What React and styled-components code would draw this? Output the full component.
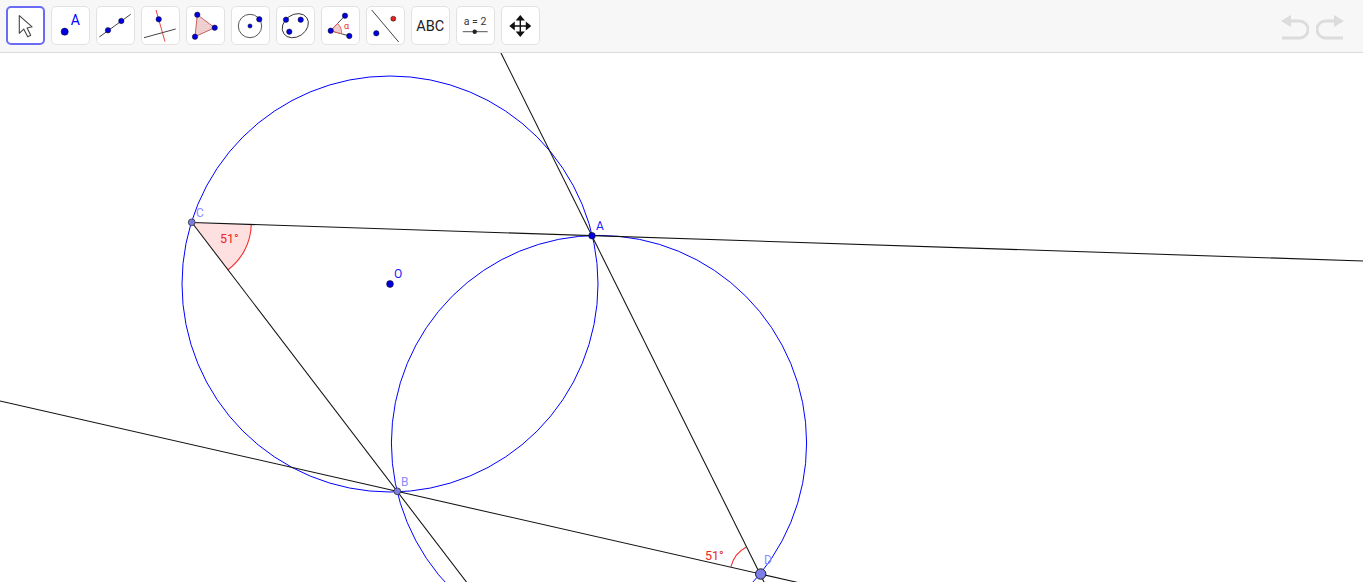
import React from "react";
import styled, { createGlobalStyle } from "styled-components";

const Global = createGlobalStyle`
  html, body { margin: 0; padding: 0; background: #fff; overflow: hidden; }
  #root { width: 1365px; height: 584px; }
`;
const Page = styled.div`
  width: 1363px; height: 582px; display: flex; flex-direction: column;
  font-family: Roboto, "Liberation Sans", sans-serif; overflow: hidden;
`;
const Toolbar = styled.div`
  flex: 0 0 53px; box-sizing: border-box; height: 53px; display: flex; align-items: flex-start;
  justify-content: space-between; padding: 6px 0 0 6px; background: #f7f7f7; border-bottom: 1px solid #dcdcdc;
`;
const Tools = styled.div`display: flex; gap: 6px; margin-left: -0.4px;`;
const Tool = styled.div`
  box-sizing: border-box; width: 39px; height: 39px; display: flex; align-items: center; justify-content: center;
  background: #fff; border-radius: 5px;
  border: ${p => (p.$active ? "2px solid #6a6cf6" : "1px solid #e2e2e2")};
  svg { display: block; width: 37px; height: 37px; flex: none; }
`;
const History = styled.div`display: flex; gap: 7px; padding: 8px 19px 0 0;`;
const Canvas = styled.svg`flex: 1 1 auto; display: block; width: 1363px; height: 529px;`;
const Label = styled.text`
  font-family: Roboto, "Liberation Sans", sans-serif; font-size: ${p => p.$size || 12}px; fill: ${p => p.$color};
`;

const B = "#0000ff", K = "#111", R = "#f52c2c", DOT = "#0000e0";
const Dot = ({ x, y, r = 2.7 }) => <circle cx={x} cy={y} r={r} fill={DOT} stroke="#111" strokeWidth=".5" />;
const Ic = ({ children }) => <svg viewBox="0 0 37 37">{children}</svg>;
const Hatch = ({ id }) => (
  <defs>
    <pattern id={id} width="2" height="2" patternUnits="userSpaceOnUse">
      <rect width="2" height="2" fill="#f4e6e6" />
      <circle cx="1" cy="1" r=".55" fill="#d98080" />
    </pattern>
  </defs>
);

const icons = [
  <Ic><path d="M12.3 8.7V26.3l4.4-4.2 4 7.6 3-1.5-3.6-7.2 5-1.2z" fill="#fff" stroke="#444" strokeWidth="1.1" strokeLinejoin="round" /></Ic>,
  <Ic><circle cx="12.7" cy="24.7" r="3.6" fill={DOT} stroke="#111" strokeWidth=".5" /><text x="18.7" y="18" fontFamily="Roboto, sans-serif" fontSize="14" fill={B}>A</text></Ic>,
  <Ic><path d="M2.3 30 L33.7 7.3" stroke="#444" strokeWidth="1" /><Dot x="11" y="23.3" /><Dot x="24.3" y="14" /></Ic>,
  <Ic><path d="M14 3 L23 34.7" stroke="#f04444" strokeWidth="1" /><path d="M2 30.7 L33.7 22" stroke="#444" strokeWidth="1" /><Dot x="16.7" y="12.3" /></Ic>,
  <Ic><Hatch id="tri" /><path d="M10.3 7.7 L27.7 20.7 L8 29.7 Z" fill="url(#tri)" stroke="#c86060" strokeWidth="1" /><Dot x="10.3" y="7.7" /><Dot x="27.7" y="20.7" /><Dot x="8" y="29.7" /></Ic>,
  <Ic><circle cx="18" cy="19" r="11.7" fill="none" stroke="#444" strokeWidth=".9" /><Dot x="18" y="19" r="2.1" /><Dot x="27.3" y="12.3" /></Ic>,
  <Ic><ellipse cx="18.3" cy="18.7" rx="14" ry="11" transform="rotate(-35 18.3 18.7)" fill="none" stroke="#333" strokeWidth=".9" /><Dot x="9" y="12.7" /><Dot x="23.7" y="12.7" /><Dot x="12.3" y="24.7" /></Ic>,
  <Ic><Hatch id="ang" /><path d="M23 8.7 L8.7 23.7 L27.3 29" fill="none" stroke="#444" strokeWidth="1" /><path d="M8.7 23.7 L15.5 16.6 A11 11 0 0 1 19.3 26.7 Z" fill="url(#ang)" stroke="#f04444" strokeWidth=".8" /><Dot x="23" y="8.7" /><Dot x="8.7" y="23.7" /><Dot x="27.3" y="29" /><text x="22" y="22" fontFamily="Roboto, sans-serif" fontSize="9" fill="#e83030">α</text></Ic>,
  <Ic><path d="M4.7 3 L31.7 35" stroke="#444" strokeWidth="1" /><Dot x="9.3" y="26.3" /><circle cx="26.3" cy="11.7" r="2.5" fill="#e82020" stroke="#111" strokeWidth=".5" /></Ic>,
  <Ic><text x="18.2" y="24" textAnchor="middle" fontFamily="Roboto, sans-serif" fontSize="14.5" fill="#222">ABC</text></Ic>,
  <Ic><text x="18" y="18" textAnchor="middle" fontFamily="Roboto, sans-serif" fontSize="10.5" fill="#333">a = 2</text><path d="M5.7 24.7H30.7" stroke="#555" strokeWidth="1" /><circle cx="17.7" cy="24.7" r="2.2" fill="#222" /></Ic>,
  <Ic><path d="M18.3 10v18M9 19h18.6" stroke="#111" strokeWidth="1.4" /><path d="M18.3 8l4.6 5.5h-9.2zM18.3 30l4.6-5.5h-9.2zM7.3 19l5.5-4.6v9.2zM29.3 19l-5.5-4.6v9.2z" fill="#111" /></Ic>,
];

export default function App() {
  return (
    <Page>
      <Global />
      <Toolbar>
        <Tools>
          {icons.map((ic, i) => <Tool key={i} $active={i === 0}>{ic}</Tool>)}
        </Tools>
        <History>
          <svg width="28" height="26" viewBox="0 0 28 26"><path d="M8 7H18.5a8.5 8.5 0 0 1 0 17H1" fill="none" stroke="#dcdcdc" strokeWidth="2.8" /><path d="M0 7L10 1V13Z" fill="#dcdcdc" /></svg>
          <svg width="28" height="26" viewBox="0 0 28 26"><path d="M20 7H9.5a8.5 8.5 0 0 0 0 17H27" fill="none" stroke="#dcdcdc" strokeWidth="2.8" /><path d="M28 7L18 1V13Z" fill="#dcdcdc" /></svg>
        </History>
      </Toolbar>
      <Canvas viewBox="0 53 1363 529">
        <path d="M192 222.5 L227.7 270 A59 59 0 0 0 251.3 224.4 Z" fill="#ffe0e0" />
        <path d="M227.7 270 A59 59 0 0 0 251.3 224.4" fill="none" stroke={R} strokeWidth="1.1" />
        <path d="M731 566.7 A30 30 0 0 1 746 547.3" fill="none" stroke={R} strokeWidth="1.1" />
        <circle cx="390" cy="284" r="208" fill="none" stroke={B} strokeWidth="1" />
        <circle cx="599" cy="443" r="207.6" fill="none" stroke={B} strokeWidth="1" />
        <g stroke={K} strokeWidth="1.05" fill="none">
          <path d="M192 222.5 L1365 261" />
          <path d="M501 53 L767 588" />
          <path d="M0 401 L800 583" />
          <path d="M191.7 222.3 L471 588" />
        </g>
        <Label x="220" y="243" $color="#ea2424" $size={12.5}>51°</Label>
        <Label x="705" y="560" $color="#ea2424" $size={12.5}>51°</Label>
        <Label x="196" y="217" $color="#8c8cff">C</Label>
        <Label x="596" y="230" $color="#2020ff">A</Label>
        <Label x="401" y="486" $color="#8c8cff">B</Label>
        <Label x="394" y="277.5" $color="#2020ff">O</Label>
        <Label x="764" y="563.5" $color="#8c8cff">D</Label>
        <circle cx="390" cy="284" r="3.4" fill={DOT} stroke="#111" strokeWidth=".6" />
        <circle cx="592" cy="235.7" r="3.3" fill={DOT} stroke="#111" strokeWidth=".6" />
        <circle cx="191.7" cy="222.3" r="3.4" fill="#7d7de0" stroke="#333" strokeWidth=".8" />
        <circle cx="397.3" cy="491.3" r="3.4" fill="#7d7de0" stroke="#333" strokeWidth=".8" />
        <circle cx="760.7" cy="574" r="5.2" fill="#7d7de8" stroke="#222" strokeWidth="1" />
      </Canvas>
    </Page>
  );
}
